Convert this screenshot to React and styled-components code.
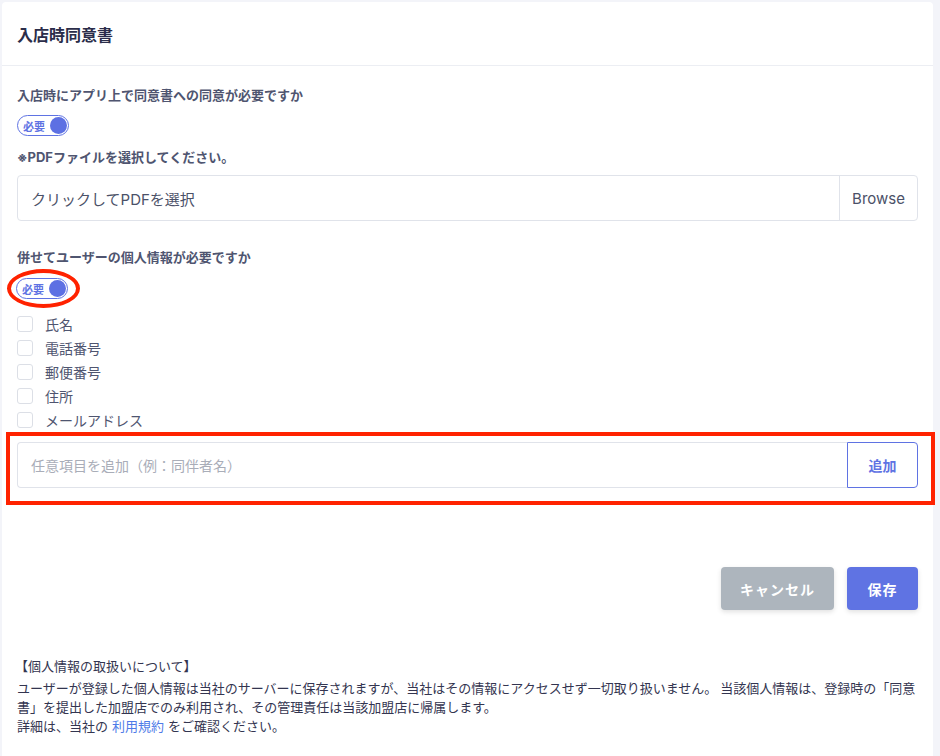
import styled, { createGlobalStyle } from "styled-components";

const GlobalStyle = createGlobalStyle`
  html, body {
    margin: 0;
    padding: 0;
    background: #f3f4f9;
    font-family: Inter, "Noto Sans CJK JP", sans-serif;
  }
  * { box-sizing: border-box; }
`;

const Card = styled.div`
  margin: 2px 7px 0 2px;
  background: #ffffff;
  border-radius: 4px 4px 0 0;
  min-height: 754px;
`;

const CardHeader = styled.div`
  height: 64px;
  display: flex;
  align-items: center;
  padding: 0 15px;
  border-bottom: 1px solid #eceef3;
`;

const Title = styled.h1`
  margin: 0;
  font-size: 16px;
  font-weight: 700;
  color: #2b2d4a;
`;

const CardBody = styled.div`
  padding: 20px 15px 0 15px;
  display: flex;
  flex-direction: column;
`;

const Label = styled.div`
  font-size: 13px;
  font-weight: 700;
  color: #4f5570;
  line-height: 18px;
  margin-top: ${(p) => p.$mt || 0}px;
`;

const ToggleWrap = styled.div`
  position: relative;
  width: 52px;
  margin-top: ${(p) => p.$mt || 0}px;
  margin-left: ${(p) => p.$ml || 0}px;
`;

const Toggle = styled.div`
  width: 52px;
  height: 21px;
  border: 1px solid #5f73e3;
  border-radius: 11px;
  display: flex;
  align-items: center;
  justify-content: space-between;
  padding: 0 1px 0 5px;
  font-size: 11px;
  font-weight: 700;
  color: #5f73e3;
`;

const Knob = styled.span`
  width: 17px;
  height: 17px;
  border-radius: 50%;
  background: #5d70e3;
`;

const RedEllipse = styled.div`
  position: absolute;
  left: -9px;
  top: -9px;
  width: 73px;
  height: 39px;
  border: 4px solid #ff2200;
  border-radius: 50%;
  pointer-events: none;
`;

const FileInput = styled.div`
  margin-top: 9px;
  height: 46px;
  border: 1px solid #e0e3ea;
  border-radius: 4px;
  display: flex;
  align-items: stretch;
  font-size: 15px;
  color: #4b5168;
`;

const FileText = styled.div`
  flex: 1;
  display: flex;
  align-items: center;
  padding-left: 13px;
`;

const BrowseBtn = styled.div`
  width: 78px;
  border-left: 1px solid #e0e3ea;
  display: flex;
  align-items: center;
  justify-content: center;
`;

const CheckList = styled.div`
  margin-top: 16px;
  display: flex;
  flex-direction: column;
  gap: 7px;
`;

const CheckRow = styled.label`
  display: flex;
  align-items: center;
  gap: 12px;
  height: 17px;
  font-size: 14px;
  color: #4f5570;
`;

const Box = styled.span`
  width: 16px;
  height: 16px;
  border: 1px solid #dcdfe6;
  border-radius: 3px;
  background: #fff;
`;

const AddRow = styled.div`
  position: relative;
  margin-top: 14px;
  height: 46px;
  display: flex;
`;

const RedRect = styled.div`
  position: absolute;
  left: -11px;
  right: -17px;
  top: -10px;
  bottom: -17px;
  border: 4px solid #ff2200;
  pointer-events: none;
`;

const AddInput = styled.div`
  flex: 1;
  border: 1px solid #e0e3ea;
  border-right: none;
  border-radius: 4px 0 0 4px;
  display: flex;
  align-items: center;
  padding-left: 13px;
  font-size: 14px;
  color: #a9adb8;
`;

const AddBtn = styled.div`
  width: 71px;
  border: 1px solid #5f73e3;
  border-radius: 0 4px 4px 0;
  display: flex;
  align-items: center;
  justify-content: center;
  font-size: 14px;
  font-weight: 700;
  color: #5f73e3;
`;

const Actions = styled.div`
  margin-top: 79px;
  display: flex;
  justify-content: flex-end;
  gap: 13px;
`;

const ActionBtn = styled.button`
  height: 43px;
  width: ${(p) => p.$w}px;
  border: none;
  border-radius: 4px;
  background: ${(p) => p.$bg};
  color: #fff;
  font-family: inherit;
  font-size: 14px;
  font-weight: 700;
  letter-spacing: 1px;
  box-shadow: 0 2px 5px rgba(0, 0, 0, 0.12);
`;

const Notice = styled.div`
  margin-top: 46px;
  font-family: "Noto Sans CJK JP", sans-serif;
  font-size: 13px;
  line-height: 19px;
  color: #333550;
`;

const NoticeHead = styled.div`
  margin-bottom: 3px;
  margin-left: -2px;
`;

const Link = styled.a`
  color: #4f7be8;
  text-decoration: none;
  margin: 0 4px;
`;

const fields = ["氏名", "電話番号", "郵便番号", "住所", "メールアドレス"];

export default function App() {
  return (
    <>
      <GlobalStyle />
      <Card>
        <CardHeader>
          <Title>入店時同意書</Title>
        </CardHeader>
        <CardBody>
          <Label>入店時にアプリ上で同意書への同意が必要ですか</Label>
          <ToggleWrap $mt={11}>
            <Toggle>
              必要
              <Knob />
            </Toggle>
          </ToggleWrap>
          <Label $mt={12}>※PDFファイルを選択してください。</Label>
          <FileInput>
            <FileText>クリックしてPDFを選択</FileText>
            <BrowseBtn>Browse</BrowseBtn>
          </FileInput>
          <Label $mt={27}>併せてユーザーの個人情報が必要ですか</Label>
          <ToggleWrap $mt={12} $ml={-1}>
            <Toggle>
              必要
              <Knob />
            </Toggle>
            <RedEllipse />
          </ToggleWrap>
          <CheckList>
            {fields.map((f) => (
              <CheckRow key={f}>
                <Box />
                {f}
              </CheckRow>
            ))}
          </CheckList>
          <AddRow>
            <AddInput>任意項目を追加（例：同伴者名）</AddInput>
            <AddBtn>追加</AddBtn>
            <RedRect />
          </AddRow>
          <Actions>
            <ActionBtn $w={113} $bg="#adb5bd">キャンセル</ActionBtn>
            <ActionBtn $w={71} $bg="#5f73e3">保存</ActionBtn>
          </Actions>
          <Notice>
            <NoticeHead>【個人情報の取扱いについて】</NoticeHead>
            ユーザーが登録した個人情報は当社のサーバーに保存されますが、当社はその情報にアクセスせず一切取り扱いません。 当該個人情報は、登録時の「同意書」を提出した加盟店でのみ利用され、その管理責任は当該加盟店に帰属します。
            <br />
            詳細は、当社の<Link href="#">利用規約</Link>をご確認ください。
          </Notice>
        </CardBody>
      </Card>
    </>
  );
}
